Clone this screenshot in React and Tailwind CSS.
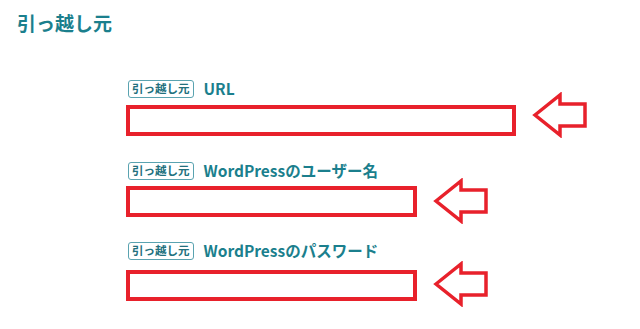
const FONT = '"Noto Sans CJK JP", "Noto Sans", sans-serif'

const Arrow = ({ className }) => (
  <svg width="56" height="46" viewBox="0 0 56 46" className={`shrink-0 ${className}`}>
    <polygon
      points="3,23 28,3 28,12 53,12 53,34 28,34 28,43"
      fill="white"
      stroke="#e8212b"
      strokeWidth="3.5"
      strokeLinejoin="miter"
    />
  </svg>
)

const Badge = () => (
  <span className="ml-[2px] inline-flex h-[18px] items-center rounded-[3px] border border-[#5aa3b0] px-[3px] text-[11.5px] font-bold leading-none text-[#22707d]">
    引っ越し元
  </span>
)

const Field = ({ label, boxWidth, rowClass, arrowClass }) => (
  <div className="flex flex-col">
    <div className="flex h-[22px] items-center gap-[10px]">
      <Badge />
      <span className="text-[15.5px] font-bold leading-none text-[#1b7f8d]">{label}</span>
    </div>
    <div className={`flex h-[31px] items-center gap-[16px] ${rowClass}`}>
      <div className="h-[31px] border-4 border-[#e8212b] bg-white" style={{ width: boxWidth }} />
      <Arrow className={arrowClass} />
    </div>
  </div>
)

export default function App() {
  return (
    <div className="h-[329px] w-[640px] bg-white" style={{ fontFamily: FONT }}>
      <h2 className="pl-[17px] pt-[10px] text-[19px] font-bold leading-[26px] text-[#1b7f8d]">引っ越し元</h2>
      <div className="mt-[42px] flex flex-col pl-[126px]">
        <Field label="URL" boxWidth={390} rowClass="mt-[5px]" arrowClass="-translate-y-[6px]" />
        <div className="mt-[24px]">
          <Field label="WordPressのユーザー名" boxWidth={291} rowClass="mt-[4px]" arrowClass="-translate-y-[1px]" />
        </div>
        <div className="mt-[23px]">
          <Field label="WordPressのパスワード" boxWidth={291} rowClass="mt-[8px]" arrowClass="-translate-y-[2px]" />
        </div>
      </div>
    </div>
  )
}
